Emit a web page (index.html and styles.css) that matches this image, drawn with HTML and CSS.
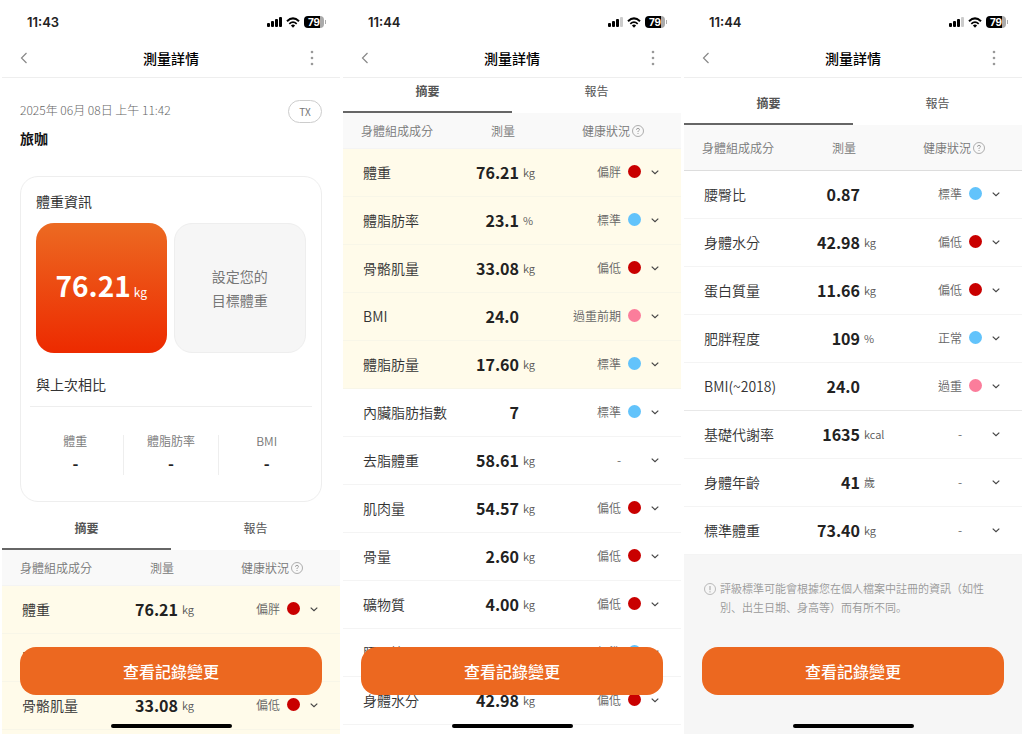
FILE: index.html
```html
<!DOCTYPE html>
<html lang="zh-Hant">
<head>
    <meta charset="UTF-8">
    <meta name="viewport" content="width=device-width, initial-scale=1.0">
    <title>測量詳情</title>
    <link rel="stylesheet" href="styles.css">
</head>
<body>
    <!--shared icons-->
    <svg class="icon-defs" aria-hidden="true">
        <symbol id="icon-back" viewBox="0 0 8 12">
            <path d="M6.5 1 L1.5 6 L6.5 11" fill="none" stroke="#888" stroke-width="1.2"/>
        </symbol>
        <symbol id="icon-more" viewBox="0 0 4 16">
            <circle cx="2" cy="2" r="1.3" fill="#999"/>
            <circle cx="2" cy="8" r="1.3" fill="#999"/>
            <circle cx="2" cy="14" r="1.3" fill="#999"/>
        </symbol>
        <symbol id="icon-wifi" viewBox="0 0 14 11">
            <path d="M1 4.2 Q7 -1.4 13 4.2" fill="none" stroke="#000" stroke-width="2"/>
            <path d="M3.3 6.8 Q7 3.4 10.7 6.8" fill="none" stroke="#000" stroke-width="1.8"/>
            <path d="M4.9 8.5 Q7 6.7 9.1 8.5 L7 10.8 Z" fill="#000"/>
        </symbol>
        <symbol id="icon-down" viewBox="0 0 10 10">
            <path d="M1.7 3.6 L5 6.6 L8.3 3.6" fill="none" stroke="#444" stroke-width="1.2"/>
        </symbol>
        <symbol id="icon-help" viewBox="0 0 12 12">
            <circle cx="6" cy="6" r="5.5" fill="none" stroke="#999" stroke-width="0.8"/>
            <path d="M4.5 4.8 Q4.5 3.3 6 3.3 Q7.4 3.3 7.4 4.6 Q7.4 5.3 6.6 5.8 Q6 6.2 6 7" fill="none" stroke="#888" stroke-width="0.8"/>
            <circle cx="6" cy="8.6" r="0.5" fill="#888"/>
        </symbol>
        <symbol id="icon-info" viewBox="0 0 12 12">
            <circle cx="6" cy="6" r="5.5" fill="none" stroke="#aaa" stroke-width="0.8"/>
            <path d="M6 3 V7.2" stroke="#999" stroke-width="0.9"/>
            <circle cx="6" cy="8.8" r="0.6" fill="#999"/>
        </symbol>
    </svg>

    <main class="screens">
        <!--top of the measurement-->
        <section class="phone">
            <header class="phone-top" data-time="11:43" data-signal="4"></header>
            <div class="scroll">
                <div class="record">
                    <div>
                        <p class="record-date">2025年 06月 08日 上午 11:42</p>
                        <h2 class="record-name">旅咖</h2>
                    </div>
                    <button class="pill">TX</button>
                </div>

                <div class="card">
                    <h3 class="card-title">體重資訊</h3>
                    <div class="tiles">
                        <div class="tile tile-weight"><strong>76.21</strong><span>kg</span></div>
                        <button class="tile tile-goal">設定您的<br>目標體重</button>
                    </div>
                    <h3 class="card-title compare-title">與上次相比</h3>
                    <dl class="compare">
                        <div><dt>體重</dt><dd>-</dd></div>
                        <div><dt>體脂肪率</dt><dd>-</dd></div>
                        <div><dt>BMI</dt><dd>-</dd></div>
                    </dl>
                </div>

                <nav class="tabs">
                    <button class="tab active">摘要</button>
                    <button class="tab">報告</button>
                </nav>
                <table class="results" data-from="0" data-to="4"></table>
            </div>
            <button class="history-button">查看記錄變更</button>
            <div class="home-bar"></div>
        </section>

        <!--summary list-->
        <section class="phone">
            <header class="phone-top" data-time="11:44" data-signal="3"></header>
            <div class="scroll">
                <nav class="tabs">
                    <button class="tab active">摘要</button>
                    <button class="tab">報告</button>
                </nav>
                <table class="results" data-from="0" data-to="12"></table>
            </div>
            <button class="history-button">查看記錄變更</button>
            <div class="home-bar"></div>
        </section>

        <!--end of the list-->
        <section class="phone">
            <header class="phone-top" data-time="11:44" data-signal="3"></header>
            <div class="scroll">
                <nav class="tabs tabs-tall">
                    <button class="tab active">摘要</button>
                    <button class="tab">報告</button>
                </nav>
                <table class="results results-end" data-from="10" data-to="18"></table>
                <footer class="note">
                    <svg width="12" height="12"><use href="#icon-info"/></svg>
                    <p lang="ja">評級標準可能會根據您在個人檔案中註冊的資訊（如性別、出生日期、身高等）而有所不同。</p>
                </footer>
            </div>
            <button class="history-button">查看記錄變更</button>
            <div class="home-bar"></div>
        </section>
    </main>

    <script>
        //name, value, unit, status, dot colour, row class
        const measurements = [
            ['體重', '76.21', 'kg', '偏胖', 'red', 'key'],
            ['體脂肪率', '23.1', '%', '標準', 'blue', 'key'],
            ['骨骼肌量', '33.08', 'kg', '偏低', 'red', 'key'],
            ['BMI', '24.0', '', '過重前期', 'pink', 'key'],
            ['體脂肪量', '17.60', 'kg', '標準', 'blue', 'key'],
            ['內臟脂肪指數', '7', '', '標準', 'blue', ''],
            ['去脂體重', '58.61', 'kg', '-', 'none', ''],
            ['肌肉量', '54.57', 'kg', '偏低', 'red', ''],
            ['骨量', '2.60', 'kg', '偏低', 'red', ''],
            ['礦物質', '4.00', 'kg', '偏低', 'red', ''],
            ['腰臀比', '0.87', '', '標準', 'blue', ''],
            ['身體水分', '42.98', 'kg', '偏低', 'red', ''],
            ['蛋白質量', '11.66', 'kg', '偏低', 'red', ''],
            ['肥胖程度', '109', '%', '正常', 'blue', ''],
            ['BMI(~2018)', '24.0', '', '過重', 'pink', 'group-end'],
            ['基礎代謝率', '1635', 'kcal', '-', 'none', ''],
            ['身體年齡', '41', '歲', '-', 'none', ''],
            ['標準體重', '73.40', 'kg', '-', 'none', '']
        ];

        //status bar and title bar
        document.querySelectorAll('.phone-top').forEach(top => {
            const { time, signal } = top.dataset;
            const bars = [4, 6, 8, 10].map((height, i) =>
                `<rect x="${i * 4}" y="${10 - height}" width="3" height="${height}" rx="1" fill="${i < signal ? '#000' : '#ccc'}"/>`
            ).join('');
            top.innerHTML = `
                <div class="status-bar">
                    <span class="clock">${time}</span>
                    <svg width="16" height="10">${bars}</svg>
                    <svg width="14" height="11"><use href="#icon-wifi"/></svg>
                    <span class="battery">79</span>
                </div>
                <div class="title-bar">
                    <button class="back" aria-label="返回"><svg width="8" height="12"><use href="#icon-back"/></svg></button>
                    <h1>測量詳情</h1>
                    <button aria-label="更多"><svg width="4" height="16"><use href="#icon-more"/></svg></button>
                </div>`;
        });

        //result tables
        document.querySelectorAll('.results').forEach(table => {
            const rows = measurements.slice(table.dataset.from, table.dataset.to);
            table.innerHTML = `
                <colgroup><col><col class="col-value"><col class="col-unit"><col class="col-status"></colgroup>
                <thead>
                    <tr>
                        <th scope="col">身體組成成分</th>
                        <th scope="col" colspan="2" class="head-value">測量</th>
                        <th scope="col"><div class="head-status">健康狀況<svg width="12" height="12"><use href="#icon-help"/></svg></div></th>
                    </tr>
                </thead>
                <tbody>` + rows.map(([name, value, unit, status, dot, kind]) => `
                    <tr class="${kind}">
                        <th scope="row">${name}</th>
                        <td class="value">${value}</td>
                        <td class="unit">${unit}</td>
                        <td><div class="status">
                            <span>${status}</span><i class="dot dot-${dot}"></i>
                            <button aria-label="展開${name}"><svg width="10" height="10"><use href="#icon-down"/></svg></button>
                        </div></td>
                    </tr>`).join('') + '</tbody>';
        });
    </script>
</body>
</html>
```
FILE: styles.css
```css
/*base*/
* {
    box-sizing: border-box;
}

body {
    margin: 0;
    background-color: #fff;
    color: #222;
    font-family: "Noto Sans CJK TC", sans-serif;
    font-size: 14px;
    line-height: 20px;
}

h1, h2, h3, p, dl, dd {
    margin: 0;
}

button {
    padding: 0;
    border: none;
    background: none;
    color: inherit;
    font: inherit;
    cursor: pointer;
}

svg {
    display: block;
    flex: none;
}

.icon-defs {
    position: absolute;
    width: 0;
    height: 0;
}

/*three screens side by side*/
.screens {
    display: grid;
    grid-template-columns: repeat(3, 1fr);
    gap: 3px;
    height: 100vh;
    padding: 0 2px 2px;
}

.phone {
    position: relative;
    display: flex;
    flex-direction: column;
    min-width: 0;
    min-height: 0;
    overflow: hidden;
}

.phone-top {
    border-bottom: 1px solid #eee;
}

.status-bar {
    display: flex;
    align-items: center;
    gap: 3px;
    height: 44px;
    padding: 0 13px 0 25px;
}

.clock {
    flex: 1;
    font-family: Inter, sans-serif;
    font-size: 13px;
    font-weight: 600;
}

.battery {
    position: relative;
    width: 20px;
    margin: 0 3px 0 1px;
    border-radius: 4px;
    background: linear-gradient(90deg, #000 79%, #aaa 79%);
    color: #fff;
    font-family: Inter, sans-serif;
    font-size: 10px;
    font-weight: 700;
    line-height: 12px;
    text-align: center;
}

.battery::after {
    content: "";
    position: absolute;
    top: 4px;
    right: -2px;
    width: 1px;
    height: 4px;
    background-color: #aaa;
}

.title-bar {
    display: flex;
    align-items: center;
    justify-content: space-between;
    height: 33px;
    padding: 0 26px 5px 18px;
}

.title-bar h1 {
    font-size: 14px;
    font-weight: 500;
    color: #000;
}

.back {
    width: 12px;
}

.scroll {
    flex: 1;
    display: flex;
    flex-direction: column;
    min-height: 0;
    overflow-y: auto;
    scrollbar-width: none;
}

.scroll > * {
    flex: none;
}

/*date and user*/
.record {
    display: flex;
    align-items: flex-start;
    justify-content: space-between;
    padding: 22px 18px 28px;
}

.record-date {
    margin-bottom: 8px;
    color: #666;
    font-size: 12px;
    font-weight: 300;
}

.record-name {
    font-size: 14px;
    font-weight: 700;
    color: #111;
}

.pill {
    width: 34px;
    height: 23px;
    border: 1px solid #ccc;
    border-radius: 12px;
    color: #777;
    font-size: 10px;
}

/*weight card*/
.card {
    margin: 0 18px 13px;
    padding-bottom: 26px;
    border: 1px solid #eee;
    border-radius: 18px;
}

.card-title {
    padding: 14px 15px 12px;
    color: #333;
    font-size: 14px;
    font-weight: 400;
}

.tiles {
    display: flex;
    gap: 7px;
    padding: 0 15px;
}

.tile {
    flex: 1;
    height: 130px;
    border-radius: 18px;
}

.tile-weight {
    display: flex;
    align-items: baseline;
    justify-content: center;
    gap: 3px;
    background: linear-gradient(#ec6a22, #ed2a00);
    color: #fff;
    font-size: 12px;
    line-height: 124px;
}

.tile-weight strong {
    font-size: 28px;
    font-weight: 700;
}

.tile-goal {
    border: 1px solid #eee;
    background-color: #f6f6f6;
    color: #777;
    line-height: 24px;
}

.compare-title {
    margin: 0 9px;
    padding: 21px 6px 12px;
    border-bottom: 1px solid #eee;
}

.compare {
    display: flex;
    padding: 28px 7px 0;
    text-align: center;
}

.compare div {
    flex: 1;
}

.compare div + div {
    border-left: 1px solid #eee;
}

.compare dt {
    margin-top: -4px;
    color: #777;
    font-size: 12px;
    font-weight: 350;
}

.compare dd {
    font-size: 16px;
    font-weight: 700;
    line-height: 24px;
}

/*tabs*/
.tabs {
    display: flex;
    padding-top: 3px;
}

.tabs-tall {
    padding-top: 15px;
}

.tab {
    flex: 1;
    padding-bottom: 10px;
    border-bottom: 2px solid transparent;
    color: #555;
    font-size: 12px;
    line-height: 20px;
}

.tab.active {
    border-bottom-color: #666;
    font-weight: 700;
}

/*results*/
.results {
    width: 100%;
    table-layout: fixed;
    border-spacing: 0;
}

.col-value {
    width: 60px;
}

.col-unit {
    width: 28px;
}

.col-status {
    width: 134px;
}

.results th,
.results td {
    padding: 0 0 2px;
    text-align: left;
    white-space: nowrap;
    border-bottom: 1px solid #f4f4f4;
}

.results thead th {
    height: 36px;
    padding: 0 0 0 18px;
    background-color: #f9f9f9;
    color: #777;
    font-size: 12px;
    font-weight: 350;
}

.results thead .head-value {
    padding-left: 0;
    text-align: center;
}

.head-status {
    display: flex;
    align-items: center;
    justify-content: flex-end;
    gap: 2px;
    padding-right: 37px;
}

.results-end thead th {
    height: 46px;
    border-bottom-color: #ddd;
}

.results tbody th {
    height: 48px;
    padding-left: 20px;
    color: #333;
    font-size: 14px;
    font-weight: 350;
}

.results .key th,
.results .key td {
    border-bottom-color: #f8f6e8;
    background-color: #fffbea;
}

.results .group-end th,
.results .group-end td {
    border-bottom-color: #e8e8e8;
}

.results .value {
    text-align: right;
    font-size: 16px;
    font-weight: 700;
}

.results .unit {
    padding-left: 4px;
    color: #555;
    font-size: 11px;
    font-weight: 350;
}

.status {
    display: flex;
    align-items: center;
    justify-content: flex-end;
    padding-right: 21px;
    color: #666;
    font-size: 12px;
    font-weight: 350;
}

.dot {
    width: 13px;
    height: 13px;
    margin: 0 9px 0 7px;
    border-radius: 50%;
}

.dot-red {
    background-color: #c90000;
}

.dot-blue {
    background-color: #62c3fb;
}

.dot-pink {
    background-color: #fb7d9b;
}

/*note under the list*/
.note {
    display: flex;
    align-items: flex-start;
    gap: 4px;
    padding: 24px 20px 0;
    background-color: #f6f6f6;
    color: #999;
    font-family: "Noto Sans CJK JP", sans-serif;
    font-size: 11px;
    font-weight: 350;
    line-height: 19px;
}

.scroll > .note {
    flex: 1;
}

.note svg {
    margin-top: 4px;
}

/*fixed bottom button*/
.history-button {
    position: absolute;
    right: 18px;
    bottom: 39px;
    left: 18px;
    height: 48px;
    border-radius: 16px;
    background-color: #ec6820;
    color: #fff;
    font-size: 16px;
    font-weight: 500;
}

.home-bar {
    position: absolute;
    bottom: 6px;
    left: 50%;
    width: 121px;
    height: 4px;
    margin-left: -60px;
    border-radius: 2px;
    background-color: #000;
}
```
